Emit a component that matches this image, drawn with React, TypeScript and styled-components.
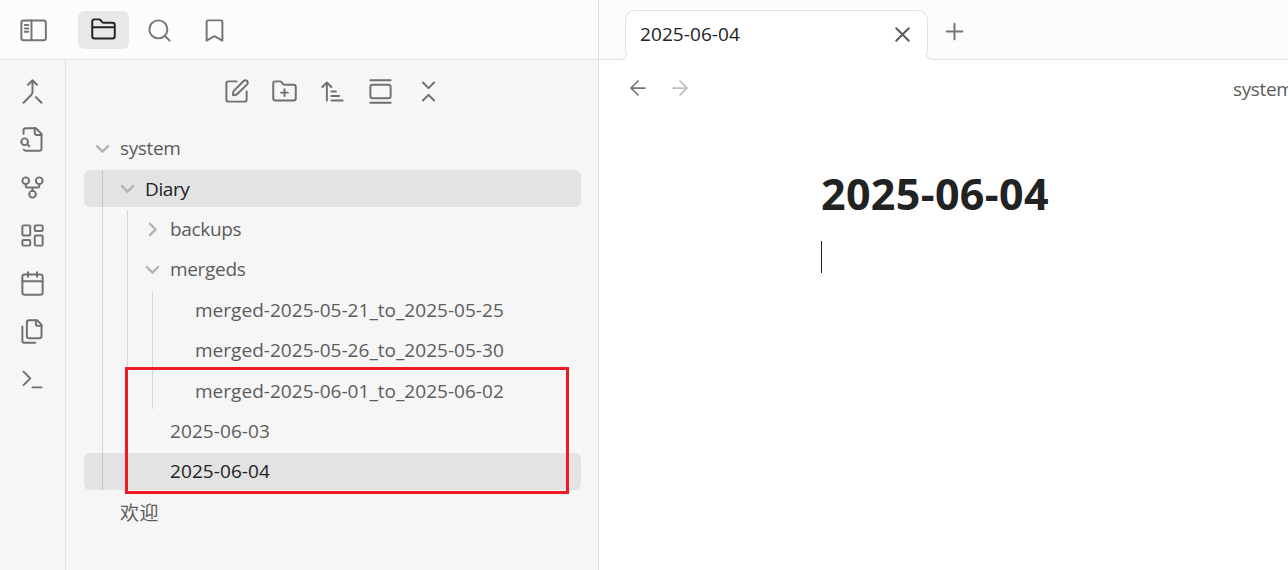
import React from 'react';
import styled, { createGlobalStyle } from 'styled-components';

const GlobalStyle = createGlobalStyle`
  * { box-sizing: border-box; }
  body {
    margin: 0;
    overflow: hidden;
    font-family: 'Open Sans', 'Noto Sans CJK SC', sans-serif;
    font-size: 19px;
    color: #5c5c5c;
    background: #fff;
  }
`;

const Window = styled.div`
  position: relative;
  display: flex;
  width: 1288px;
  height: 570px;
  overflow: hidden;
`;

const Left = styled.div`
  display: flex;
  flex-direction: column;
  width: 599px;
  flex: none;
  border-right: 1px solid #e0e0e0;
  background: #f6f6f6;
`;

const LeftHeader = styled.header`
  display: flex;
  align-items: center;
  height: 60px;
  flex: none;
  padding: 0 0 1px 8px;
  background: #fcfcfc;
  border-bottom: 1px solid #e0e0e0;
`;

const HeaderButton = styled.div<{ $active?: boolean; $gap?: number }>`
  display: flex;
  align-items: center;
  justify-content: center;
  width: 51px;
  height: 38px;
  margin-top: 1px;
  margin-left: ${(p) => p.$gap ?? 4}px;
  padding-top: ${(p) => (p.$active ? 0 : 1)}px;
  border-radius: 6px;
  color: ${(p) => (p.$active ? '#222' : '#757575')};
  background: ${(p) => (p.$active ? '#e8e8e8' : 'transparent')};
`;

const LeftBody = styled.div`
  display: flex;
  flex: 1;
`;

const Ribbon = styled.nav`
  display: flex;
  flex-direction: column;
  align-items: center;
  gap: 21px;
  width: 66px;
  padding-top: 18px;
  border-right: 1px solid #e0e0e0;
  color: #707070;
`;

const Explorer = styled.section`
  flex: 1;
  padding: 18px 17px 0 18px;
`;

const Actions = styled.div`
  display: flex;
  justify-content: center;
  gap: 21px;
  height: 51.7px;
  padding-right: 1px;
  color: #707070;
`;

const Group = styled.div<{ $depth?: number }>`
  position: relative;
  display: flex;
  flex-direction: column;
  gap: 3px;
  &::before {
    content: '';
    display: ${(p) => (p.$depth === undefined ? 'none' : 'block')};
    position: absolute;
    z-index: 1;
    top: 0;
    bottom: 0;
    left: ${(p) => 18 + 25 * (p.$depth ?? 0)}px;
    width: 1px;
    background: rgba(0, 0, 0, 0.13);
  }
`;

const Row = styled.div<{ $depth: number; $active?: boolean }>`
  display: flex;
  align-items: center;
  height: 37.37px;
  padding-left: ${(p) => 11 + 25 * p.$depth}px;
  border-radius: 6px;
  white-space: nowrap;
  color: ${(p) => (p.$active ? '#222' : '#5c5c5c')};
  background: ${(p) => (p.$active ? '#e3e3e3' : 'transparent')};
`;

const Slot = styled.span`
  display: flex;
  width: 25px;
  flex: none;
  color: #b3b3b3;
`;

const Label = styled.span<{ $spacing?: number }>`
  letter-spacing: ${(p) => p.$spacing ?? 0}px;
`;

const Main = styled.main`
  flex: 1;
  min-width: 0;
  background: #fff;
`;

const TabBar = styled.div`
  display: flex;
  height: 60px;
  padding: 10px 0 0 26px;
  background: #fcfcfc;
  box-shadow: inset 0 -1px 0 #e0e0e0;
`;

const Tab = styled.div`
  position: relative;
  display: flex;
  justify-content: space-between;
  align-items: center;
  width: 303px;
  height: 50px;
  padding: 0 12px 3px 14px;
  border: 1px solid #e0e0e0;
  border-bottom: none;
  border-radius: 10px 10px 0 0;
  background: #fff;
  color: #222;
  &::before,
  &::after {
    content: '';
    position: absolute;
    bottom: 0;
    width: 7px;
    height: 7px;
    background: #fcfcfc;
    border: 0 solid #e0e0e0;
    border-bottom-width: 1px;
  }
  &::before {
    left: -7px;
    border-right-width: 1px;
    border-bottom-right-radius: 6px;
    box-shadow: 2px 2px 0 #fff;
  }
  &::after {
    right: -7px;
    border-left-width: 1px;
    border-bottom-left-radius: 6px;
    box-shadow: -2px 2px 0 #fff;
  }
`;

const CloseIcon = styled.span`
  display: flex;
  color: #5a5a5a;
`;

const NewTab = styled.div`
  display: flex;
  padding: 8px 0 0 13px;
  color: #757575;
`;

const ViewHeader = styled.div`
  display: flex;
  align-items: center;
  height: 56px;
  padding-left: 27px;
`;

const NavIcon = styled.span<{ $muted?: boolean }>`
  display: flex;
  width: 42px;
  flex: none;
  color: ${(p) => (p.$muted ? '#bcbcbc' : '#757575')};
`;

const Crumb = styled.span`
  flex: none;
  margin-left: 523px;
  padding-top: 1px;
  white-space: nowrap;
  letter-spacing: -0.35px;
`;

const Editor = styled.article`
  padding: 48px 0 0 222px;
`;

const Title = styled.h1`
  margin: 0;
  font-size: 43px;
  font-weight: 700;
  line-height: 60px;
  letter-spacing: 0.35px;
  color: #222;
`;

const Caret = styled.div`
  width: 1px;
  height: 32px;
  margin-top: 17px;
  background: #222;
`;

const Highlight = styled.div`
  position: absolute;
  z-index: 2;
  left: 125px;
  top: 367px;
  width: 444px;
  height: 127px;
  border: 3px solid #ed1c24;
`;

const shapes = {
  sidebar: (
    <>
      <rect x="1.2" y="3.1" width="21.8" height="17.6" rx="2" />
      <path d="M10.2 3.1v17.6M4.2 7.2h3.1M4.2 10.2h3.1M4.2 13.2h3.1" />
    </>
  ),
  folder: (
    <path d="M20 20a2 2 0 0 0 2-2V8a2 2 0 0 0-2-2h-7.9a2 2 0 0 1-1.69-.9L9.6 3.9A2 2 0 0 0 7.93 3H4a2 2 0 0 0-2 2v13a2 2 0 0 0 2 2ZM2 10h20" />
  ),
  search: (
    <>
      <circle cx="11" cy="11" r="8" />
      <path d="m21 21-4.3-4.3" />
    </>
  ),
  bookmark: <path d="m19 21-7-4-7 4V4.2A1.2 1.2 0 0 1 6.2 3h11.6A1.2 1.2 0 0 1 19 4.2z" />,
  merge: <path d="m8 6 4-4 4 4M12 2v10.3a4 4 0 0 1-1.172 2.872L4 22M20 22l-5-5" />,
  fileSearch: (
    <>
      <path d="M14 2v4a2 2 0 0 0 2 2h4" />
      <path d="M4.268 21a2 2 0 0 0 1.727 1H18a2 2 0 0 0 2-2V7l-5-5H6a2 2 0 0 0-2 2v3" />
      <path d="m9 18-1.5-1.5" />
      <circle cx="5" cy="14" r="3" />
    </>
  ),
  fork: (
    <>
      <circle cx="12" cy="18" r="3" />
      <circle cx="6" cy="6" r="3" />
      <circle cx="18" cy="6" r="3" />
      <path d="M18 9v2c0 .6-.4 1-1 1H7c-.6 0-1-.4-1-1V9M12 12v3" />
    </>
  ),
  dashboard: (
    <>
      <rect width="7" height="9" x="3" y="3" rx="1" />
      <rect width="7" height="5" x="14" y="3" rx="1" />
      <rect width="7" height="9" x="14" y="12" rx="1" />
      <rect width="7" height="5" x="3" y="16" rx="1" />
    </>
  ),
  calendar: (
    <>
      <rect width="18" height="18" x="3" y="4" rx="2" />
      <path d="M8 2v4M16 2v4M3 10h18" />
    </>
  ),
  files: (
    <>
      <path d="M20 7h-3a2 2 0 0 1-2-2V2" />
      <path d="M9 18a2 2 0 0 1-2-2V4a2 2 0 0 1 2-2h7l4 4v10a2 2 0 0 1-2 2Z" />
      <path d="M3 7.6v12.8A1.6 1.6 0 0 0 4.6 22h9.8" />
    </>
  ),
  terminal: <path d="m4 17 6-6-6-6M12 19h8" />,
  edit: (
    <>
      <path d="M12 3H5a2 2 0 0 0-2 2v14a2 2 0 0 0 2 2h14a2 2 0 0 0 2-2v-7" />
      <path d="M18.375 2.625a2.12 2.12 0 1 1 3 3L13 14c-1 1-2.5 1.4-4.2 1.2-.2-1.700.2-3.200 1.200-4.200z" />
    </>
  ),
  folderPlus: (
    <path d="M12 10v6M9 13h6M20 20a2 2 0 0 0 2-2V8a2 2 0 0 0-2-2h-7.9a2 2 0 0 1-1.69-.9L9.6 3.9A2 2 0 0 0 7.93 3H4a2 2 0 0 0-2 2v13a2 2 0 0 0 2 2Z" />
  ),
  sort: <path d="m3 8 4-4 4 4M7 4v16M11 12h4M11 16h7M11 20h10" />,
  gallery: (
    <>
      <path d="M3 2h18M3 22h18" />
      <rect width="18" height="12" x="3" y="6" rx="2" />
    </>
  ),
  collapse: <path d="m7 20 5-5 5 5M7 4l5 5 5-5" />,
  down: <path d="m3 8 9 9 9-9" />,
  right: <path d="m8 3 9 9-9 9" />,
  back: <path d="m12 19-7-7 7-7M19 12H5" />,
  forward: <path d="M5 12h14M12 5l7 7-7 7" />,
  close: <path d="M18 6 6 18M6 6l12 12" />,
  plus: <path d="M5 12h14M12 5v14" />,
};

type IconName = keyof typeof shapes;

const Icon = ({ name, size = 27, stroke = 1.75 }: { name: IconName; size?: number; stroke?: number }) => (
  <svg
    width={size}
    height={size}
    viewBox="0 0 24 24"
    fill="none"
    stroke="currentColor"
    strokeWidth={stroke}
    strokeLinecap="round"
    strokeLinejoin="round"
  >
    {shapes[name]}
  </svg>
);

interface ItemProps {
  depth: number;
  label: string;
  arrow?: 'down' | 'right';
  active?: boolean;
  spacing?: number;
}

const Item = ({ depth, label, arrow, active, spacing }: ItemProps) => (
  <Row $depth={depth} $active={active}>
    <Slot>{arrow && <Icon name={arrow} size={15} stroke={3.8} />}</Slot>
    <Label $spacing={spacing}>{label}</Label>
  </Row>
);

const ribbon: IconName[] = ['merge', 'fileSearch', 'fork', 'dashboard', 'calendar', 'files', 'terminal'];
const actions: IconName[] = ['edit', 'folderPlus', 'sort', 'gallery', 'collapse'];

export default function App() {
  return (
    <>
      <GlobalStyle />
      <Window>
        <Left>
          <LeftHeader>
            <HeaderButton $gap={0}><Icon name="sidebar" /></HeaderButton>
            <HeaderButton $active $gap={19}><Icon name="folder" /></HeaderButton>
            <HeaderButton $gap={5}><Icon name="search" /></HeaderButton>
            <HeaderButton><Icon name="bookmark" /></HeaderButton>
          </LeftHeader>
          <LeftBody>
            <Ribbon>
              {ribbon.map((name) => <Icon key={name} name={name} />)}
            </Ribbon>
            <Explorer>
              <Actions>
                {actions.map((name) => <Icon key={name} name={name} />)}
              </Actions>
              <Group>
                <Item depth={0} label="system" arrow="down" spacing={-0.37} />
                <Group $depth={0}>
                  <Item depth={1} label="Diary" arrow="down" active spacing={-0.4} />
                  <Group $depth={1}>
                    <Item depth={2} label="backups" arrow="right" spacing={-0.32} />
                    <Item depth={2} label="mergeds" arrow="down" spacing={-0.32} />
                    <Group $depth={2}>
                      <Item depth={3} label="merged-2025-05-21_to_2025-05-25" spacing={0.03} />
                      <Item depth={3} label="merged-2025-05-26_to_2025-05-30" spacing={0.03} />
                      <Item depth={3} label="merged-2025-06-01_to_2025-06-02" spacing={0.03} />
                    </Group>
                    <Item depth={2} label="2025-06-03" spacing={0.08} />
                    <Item depth={2} label="2025-06-04" active spacing={0.08} />
                  </Group>
                </Group>
                <Item depth={0} label="欢迎" spacing={0.4} />
              </Group>
            </Explorer>
          </LeftBody>
        </Left>
        <Main>
          <TabBar>
            <Tab>
              <Label $spacing={0.08}>2025-06-04</Label>
              <CloseIcon><Icon name="close" size={25} stroke={1.9} /></CloseIcon>
            </Tab>
            <NewTab><Icon name="plus" /></NewTab>
          </TabBar>
          <ViewHeader>
            <NavIcon><Icon name="back" size={24} /></NavIcon>
            <NavIcon $muted><Icon name="forward" size={24} /></NavIcon>
            <Crumb>system</Crumb>
          </ViewHeader>
          <Editor>
            <Title>2025-06-04</Title>
            <Caret />
          </Editor>
        </Main>
        <Highlight />
      </Window>
    </>
  );
}
